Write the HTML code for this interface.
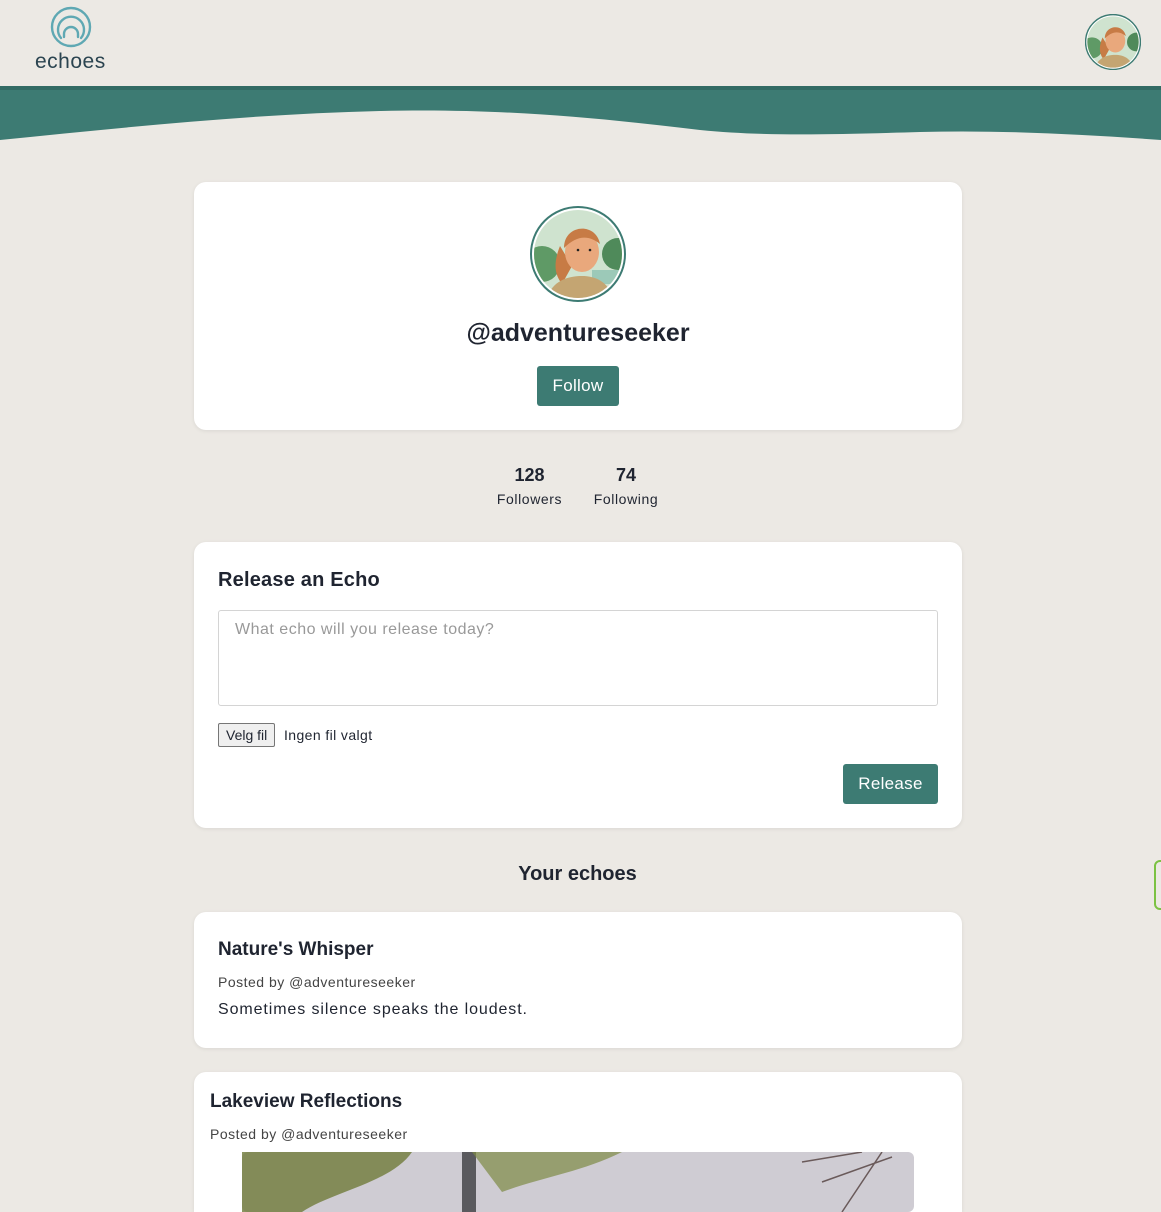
<!DOCTYPE html>
<html><head><meta charset="utf-8"><style>
*{box-sizing:border-box;margin:0;padding:0}
body{width:1161px;height:1212px;overflow:hidden;background:#ece9e4;font-family:"Liberation Sans",sans-serif;color:#1f2430;position:relative}
.card{position:absolute;left:194px;width:768px;background:#fff;border-radius:12px;box-shadow:0 1px 4px rgba(0,0,0,.08)}
.btn{position:absolute;background:#3d7b73;color:#fff;border-radius:3px;font-size:17px;text-align:center;letter-spacing:.3px}
</style></head><body>
<svg width="1161" height="145" style="position:absolute;left:0;top:0">
<path d="M0 86 H1161 V140 C1080 134 1000 130 920 132 C820 135 760 136 700 130 C600 118 500 108 380 111 C250 114 120 128 0 140Z" fill="#3d7b73"/>
<rect x="0" y="86" width="1161" height="4" fill="#336b64"/>
<g fill="none" stroke="#5fa8b3" stroke-width="2.4" stroke-linecap="round">
<circle cx="71" cy="27" r="19"/>
<path d="M61 38 A13 13 0 1 1 81 38"/>
<path d="M64 37 V34 A7 7 0 0 1 78 34 V37"/>
</g>
</svg>
<div style="position:absolute;left:35px;top:50px;font-size:21px;color:#2b4450;letter-spacing:.5px">echoes</div>
<svg width="56" height="56" style="position:absolute;left:1085px;top:14px" viewBox="0 0 96 96">
<defs><clipPath id="c1"><circle cx="48" cy="48" r="44"/></clipPath></defs>
<circle cx="48" cy="48" r="47" fill="#fff" stroke="#3d7b73" stroke-width="2.5"/>
<g clip-path="url(#c1)"><rect width="96" height="96" fill="#cfe3cf"/><circle cx="12" cy="58" r="18" fill="#5f9a66"/><circle cx="88" cy="48" r="16" fill="#4f8a5a"/><path d="M30 40 C22 60 26 70 32 78 L42 60Z" fill="#c77b45"/><ellipse cx="52" cy="46" rx="17" ry="20" fill="#e9a87c"/><path d="M34 42 C34 18 66 16 70 38 C58 28 46 30 34 42Z" fill="#c77b45"/><path d="M16 96 C20 76 36 70 52 70 C66 70 80 76 84 96Z" fill="#c4a572"/></g>
</svg>

<div class="card" style="top:182px;height:248px">
<svg width="96" height="96" style="position:absolute;left:336px;top:24px" viewBox="0 0 96 96">
<defs><clipPath id="c2"><circle cx="48" cy="48" r="44"/></clipPath></defs>
<circle cx="48" cy="48" r="47" fill="#fff" stroke="#3d7b73" stroke-width="2"/>
<g clip-path="url(#c2)"><rect width="96" height="96" fill="#cfe3cf"/><circle cx="12" cy="58" r="18" fill="#5f9a66"/><circle cx="88" cy="48" r="16" fill="#4f8a5a"/><rect x="62" y="64" width="30" height="14" fill="#9cc9b8"/><path d="M30 40 C22 60 26 70 32 78 L42 60Z" fill="#c77b45"/><ellipse cx="52" cy="46" rx="17" ry="20" fill="#e9a87c"/><path d="M34 42 C34 18 66 16 70 38 C58 28 46 30 34 42Z" fill="#c77b45"/><circle cx="48" cy="44" r="1.3" fill="#222"/><circle cx="60" cy="44" r="1.3" fill="#222"/><path d="M16 96 C20 76 36 70 52 70 C66 70 80 76 84 96Z" fill="#c4a572"/></g>
</svg>
<div style="position:absolute;left:0;width:768px;top:137px;text-align:center;font-size:25px;font-weight:bold">@adventureseeker</div>
<div class="btn" style="left:343px;top:184px;width:82px;height:40px;line-height:40px">Follow</div>
</div>

<div style="position:absolute;left:492px;top:465px;width:75px;text-align:center"><div style="font-size:18px;font-weight:bold">128</div><div style="font-size:14px;margin-top:5px;letter-spacing:.6px">Followers</div></div>
<div style="position:absolute;left:588px;top:465px;width:76px;text-align:center"><div style="font-size:18px;font-weight:bold">74</div><div style="font-size:14px;margin-top:5px;letter-spacing:.6px">Following</div></div>

<div class="card" style="top:542px;height:286px">
<div style="position:absolute;left:24px;top:27px;font-size:20px;font-weight:bold;letter-spacing:.2px">Release an Echo</div>
<div style="position:absolute;left:24px;top:68px;width:720px;height:96px;border:1px solid #d4d4d4;border-radius:3px;padding:10px 16px;font-size:16px;color:#999;letter-spacing:.5px">What echo will you release today?</div>
<div style="position:absolute;left:24px;top:181px;border:1px solid #767676;background:#efefef;border-radius:2px;font-size:14px;padding:3px 7px">Velg fil</div>
<div style="position:absolute;left:90px;top:185px;font-size:14px;letter-spacing:.4px">Ingen fil valgt</div>
<div class="btn" style="left:649px;top:222px;width:95px;height:40px;line-height:40px">Release</div>
</div>

<div style="position:absolute;left:0;width:1155px;top:863px;text-align:center;font-size:20px;font-weight:bold">Your echoes</div>
<div style="position:absolute;left:1154px;top:860px;width:20px;height:50px;border:2px solid #7cc243;border-radius:6px"></div>

<div class="card" style="top:912px;height:136px">
<div style="position:absolute;left:24px;top:27px;font-size:19px;font-weight:bold">Nature's Whisper</div>
<div style="position:absolute;left:24px;top:62px;font-size:14px;color:#444;letter-spacing:.5px">Posted by @adventureseeker</div>
<div style="position:absolute;left:24px;top:89px;font-size:16px;letter-spacing:.9px">Sometimes silence speaks the loudest.</div>
</div>

<div class="card" style="top:1072px;height:140px;border-radius:12px 12px 0 0">
<div style="position:absolute;left:16px;top:19px;font-size:19px;font-weight:bold">Lakeview Reflections</div>
<div style="position:absolute;left:16px;top:54px;font-size:14px;color:#444;letter-spacing:.5px">Posted by @adventureseeker</div>
<svg width="672" height="60" style="position:absolute;left:48px;top:80px">
<rect width="672" height="60" rx="6" fill="#cfccd3"/>
<rect x="220" y="0" width="14" height="60" fill="#5a5a5e"/>
<path d="M0 0 H170 C150 30 90 40 60 60 H0Z" fill="#6f7a3a" opacity=".8"/>
<path d="M230 0 H380 C340 20 300 25 260 40Z" fill="#7d8a45" opacity=".7"/>
<path d="M560 10 L620 0 M580 30 L650 5 M600 60 L640 0" stroke="#6a5a5a" stroke-width="1.5"/>
</svg>
</div>
</body></html>
